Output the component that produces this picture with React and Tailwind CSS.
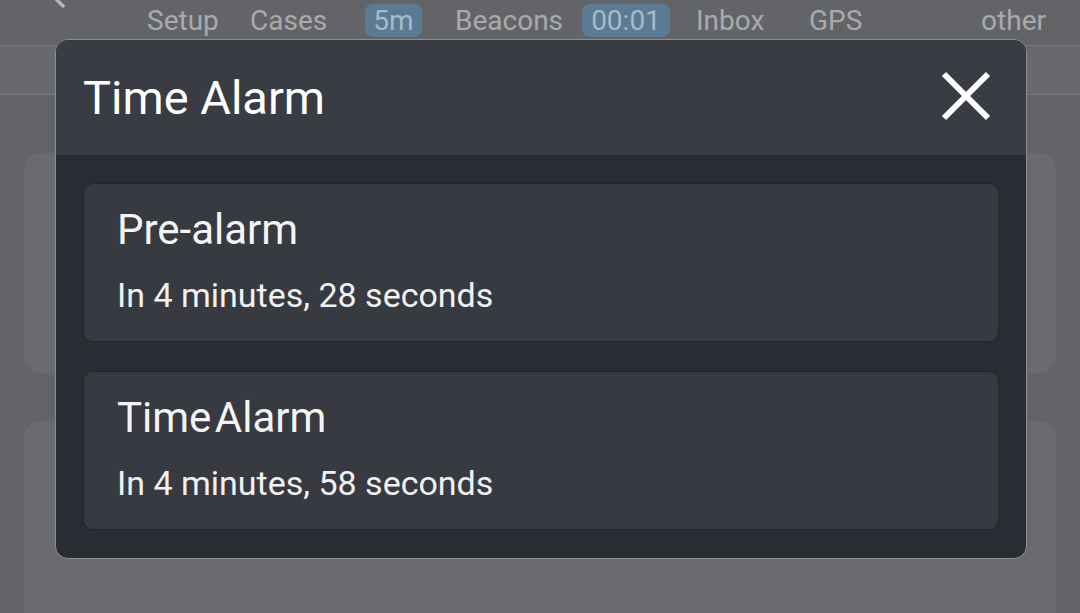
import React from 'react';

const AlarmCard = ({ title, subtitle }) => (
  <div className="h-[159px] rounded-[10px] border border-[#23252a] bg-[#383a41] pl-[33px] pt-[25px]">
    <div className="text-[42px] leading-none text-[#f4f4f5] [word-spacing:-7px]">{title}</div>
    <div className="mt-[27px] text-[34px] leading-none text-[#f1f1f2]">{subtitle}</div>
  </div>
);

const App = () => {
  return (
    <div
      className="relative h-[613px] w-[1080px] overflow-hidden bg-[#636468]"
      style={{ fontFamily: 'Roboto, "Noto Sans", sans-serif' }}
    >
      {/* dimmed app behind the dialog */}
      <div className="flex h-[45px] items-center pb-[4px] pl-[147px] text-[28px] text-[#a9aaae]">
        <svg className="absolute left-[52px] top-0" width="16" height="10" viewBox="0 0 16 10">
          <path d="M3 -2 L11 6" stroke="#b5b6b9" strokeWidth="3.5" strokeLinecap="round" />
        </svg>
        <span className="w-[103px]">Setup</span>
        <span className="w-[115px]">Cases</span>
        <span className="w-[57px] rounded-[8px] bg-[#5b7a94] text-center leading-[33px] text-[#a8b9c8]">5m</span>
        <span className="ml-[33px] w-[127px]">Beacons</span>
        <span className="w-[88px] rounded-[8px] bg-[#5b7a94] text-center leading-[33px] text-[#a8b9c8]">00:01</span>
        <span className="ml-[26px] w-[113px]">Inbox</span>
        <span>GPS</span>
        <span className="ml-auto mr-[34px]">other</span>
      </div>
      <div className="h-[50px] border-y border-[#76777b] bg-[#68696d]" />
      <div className="px-[24px] pt-[58px]">
        <div className="h-[220px] rounded-[18px] bg-[#6a6b6f]" />
        <div className="mt-[48px] h-[240px] rounded-[18px] bg-[#6a6b6f]" />
      </div>

      {/* dialog */}
      <div className="absolute left-[55px] top-[39px] w-[972px] overflow-hidden rounded-[13px] border-[1.5px] border-[#8e8f93] bg-[#2a2c33]">
        <div className="flex h-[115px] items-center justify-between bg-[#3a3c43] pl-[27px] pr-[34px]">
          <span className="text-[47px] leading-none text-white">Time Alarm</span>
          <svg className="-mt-[4px]" width="52" height="52" viewBox="0 0 52 52">
            <path d="M4 4 L48 48 M48 4 L4 48" stroke="#ffffff" strokeWidth="6" strokeLinecap="butt" />
          </svg>
        </div>
        <div className="flex flex-col gap-[29px] px-[27px] pb-[28px] pt-[28px]">
          <AlarmCard title="Pre-alarm" subtitle="In 4 minutes, 28 seconds" />
          <AlarmCard title="Time Alarm" subtitle="In 4 minutes, 58 seconds" />
        </div>
      </div>
    </div>
  );
};

export default App;
